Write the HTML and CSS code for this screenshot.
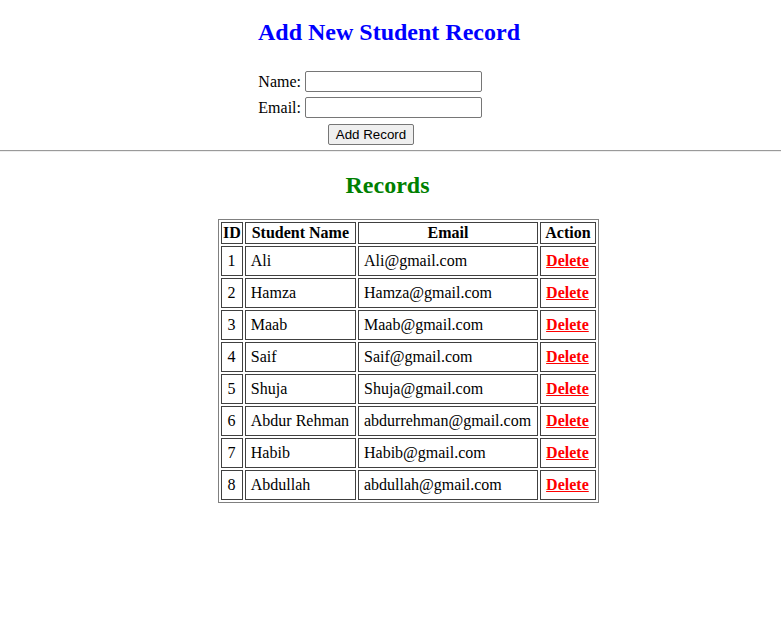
FILE: index.html
```html
<!DOCTYPE html>
<html>
<head>
<meta charset="utf-8">
<link rel="stylesheet" href="styles.css">
</head>
<body>
<h2 class="title">Add New Student Record</h2>
<form class="form">
  <label class="lbl" for="n">Name:</label><input class="inp" id="n" type="text">
  <label class="lbl" for="e">Email:</label><input class="inp" id="e" type="text">
  <div class="btnrow"><button type="button" class="btn">Add Record</button></div>
</form>
<hr class="rule">
<h2 class="records">Records</h2>
<table class="tbl">
  <tr><th>ID</th><th>Student Name</th><th>Email</th><th>Action</th></tr>
  <tr><td class="c">1</td><td>Ali</td><td>Ali@gmail.com</td><td class="c"><a href="#">Delete</a></td></tr>
  <tr><td class="c">2</td><td>Hamza</td><td>Hamza@gmail.com</td><td class="c"><a href="#">Delete</a></td></tr>
  <tr><td class="c">3</td><td>Maab</td><td>Maab@gmail.com</td><td class="c"><a href="#">Delete</a></td></tr>
  <tr><td class="c">4</td><td>Saif</td><td>Saif@gmail.com</td><td class="c"><a href="#">Delete</a></td></tr>
  <tr><td class="c">5</td><td>Shuja</td><td>Shuja@gmail.com</td><td class="c"><a href="#">Delete</a></td></tr>
  <tr><td class="c">6</td><td>Abdur Rehman</td><td>abdurrehman@gmail.com</td><td class="c"><a href="#">Delete</a></td></tr>
  <tr><td class="c">7</td><td>Habib</td><td>Habib@gmail.com</td><td class="c"><a href="#">Delete</a></td></tr>
  <tr><td class="c">8</td><td>Abdullah</td><td>abdullah@gmail.com</td><td class="c"><a href="#">Delete</a></td></tr>
</table>
</body>
</html>
```
FILE: styles.css
```css
body {
  margin: 0;
  font-family: "Liberation Serif", "Times New Roman", serif;
  font-size: 16px;
  color: #000;
  background: #fff;
}
.title {
  margin: 18px 0 0;
  padding-right: 3px;
  text-align: center;
  color: #0000ff;
  font-size: 24px;
  line-height: 28px;
}
.form {
  margin: 25px 0 0 258px;
  display: grid;
  grid-template-columns: 43px 181px;
  column-gap: 4px;
  row-gap: 5px;
  width: 228px;
  align-items: center;
}
.lbl {
  text-align: right;
  white-space: nowrap;
  line-height: 21px;
}
.inp {
  box-sizing: border-box;
  width: 177px;
  height: 21px;
  margin: 0;
  border: 1px solid #767676;
  border-radius: 2px;
  padding: 1px 2px;
  font-family: "Liberation Sans", Arial, sans-serif;
  font-size: 13.33px;
}
.btnrow {
  grid-column: 1 / 3;
  padding-left: 70px;
  margin-top: 1px;
}
.btn {
  box-sizing: border-box;
  width: 86px;
  height: 21px;
  margin: 0;
  padding: 0 6px;
  font-family: "Liberation Sans", Arial, sans-serif;
  font-size: 13.33px;
  background: #efefef;
  border: 1px solid #767676;
  border-radius: 2px;
  color: #000;
}
.rule {
  margin: 5px 0 0;
  border: 0;
  border-top: 1px solid #9a9a9a;
  border-bottom: 1px solid #eeeeee;
  height: 0;
}
.records {
  margin: 19px 0 0;
  padding-right: 6px;
  text-align: center;
  color: #008000;
  font-size: 24px;
  line-height: 28px;
}
.tbl {
  margin: 20px 0 0 218px;
  border: 1px solid #808080;
  border-spacing: 2px;
}
.tbl th, .tbl td {
  border: 1px solid #404040;
  line-height: 18px;
}
.tbl th {
  padding: 1px;
  font-weight: bold;
}
.tbl td {
  padding: 5px 6px 5px 5px;
}
.tbl td.c {
  text-align: center;
}
.tbl a {
  color: #ff0000;
  font-weight: bold;
  text-decoration: underline;
}
```
